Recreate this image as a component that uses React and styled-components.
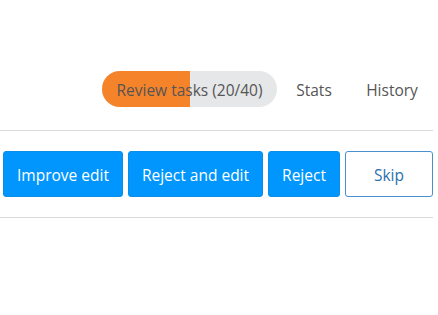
import React from "react";
import styled, { createGlobalStyle } from "styled-components";

const Global = createGlobalStyle`
  html, body { margin: 0; padding: 0; background: #fff; }
  body { font-family: "Open Sans", "Noto Sans", sans-serif; }
`;

const Page = styled.div`
  width: 433px;
  padding-top: 71px;
`;

const Nav = styled.nav`
  display: flex;
  justify-content: flex-end;
  align-items: center;
  gap: 8px;
  height: 36px;
`;

const Pill = styled.div`
  position: relative;
  height: 36px;
  width: 175px;
  border-radius: 18px;
  background: #e6e7e9;
  overflow: hidden;
  display: flex;
  align-items: center;
  justify-content: center;
`;

const Progress = styled.div`
  position: absolute;
  left: 0;
  top: 0;
  bottom: 0;
  background: #f5832a;
`;

const PillLabel = styled.span`
  position: relative;
  top: 1px;
  font-size: 15.5px;
  color: #555;
`;

const NavLink = styled.span`
  position: relative;
  top: 1px;
  width: ${(p) => p.$w}px;
  text-align: center;
  font-size: 15.5px;
  color: #555;
`;

const Actions = styled.div`
  margin-top: 23px;
  border-top: 1px solid #d9d9d9;
  border-bottom: 1px solid #d9d9d9;
  padding: 20px 0;
  display: flex;
  justify-content: flex-end;
  gap: 5px;
`;

const Button = styled.button`
  height: 46px;
  width: ${(p) => p.$w}px;
  border-radius: 3px;
  font-family: inherit;
  font-size: 15.5px;
  cursor: pointer;
  border: 1px solid ${(p) => (p.$outline ? "#4a8fcf" : "#0a8ee8")};
  background: ${(p) => (p.$outline ? "#fff" : "#0096fe")};
  color: ${(p) => (p.$outline ? "#2d6fae" : "#fff")};
  padding: 2px 0 0;
`;

export default function App() {
  const done = 20;
  const total = 40;
  return (
    <>
      <Global />
      <Page>
        <Nav>
          <Pill>
            <Progress style={{ width: `${(done / total) * 100}%` }} />
            <PillLabel>Review tasks ({done}/{total})</PillLabel>
          </Pill>
          <NavLink $w={58}>Stats</NavLink>
          <NavLink $w={82}>History</NavLink>
        </Nav>
        <Actions>
          <Button $w={120}>Improve edit</Button>
          <Button $w={135}>Reject and edit</Button>
          <Button $w={72}>Reject</Button>
          <Button $w={88} $outline>Skip</Button>
        </Actions>
      </Page>
    </>
  );
}
